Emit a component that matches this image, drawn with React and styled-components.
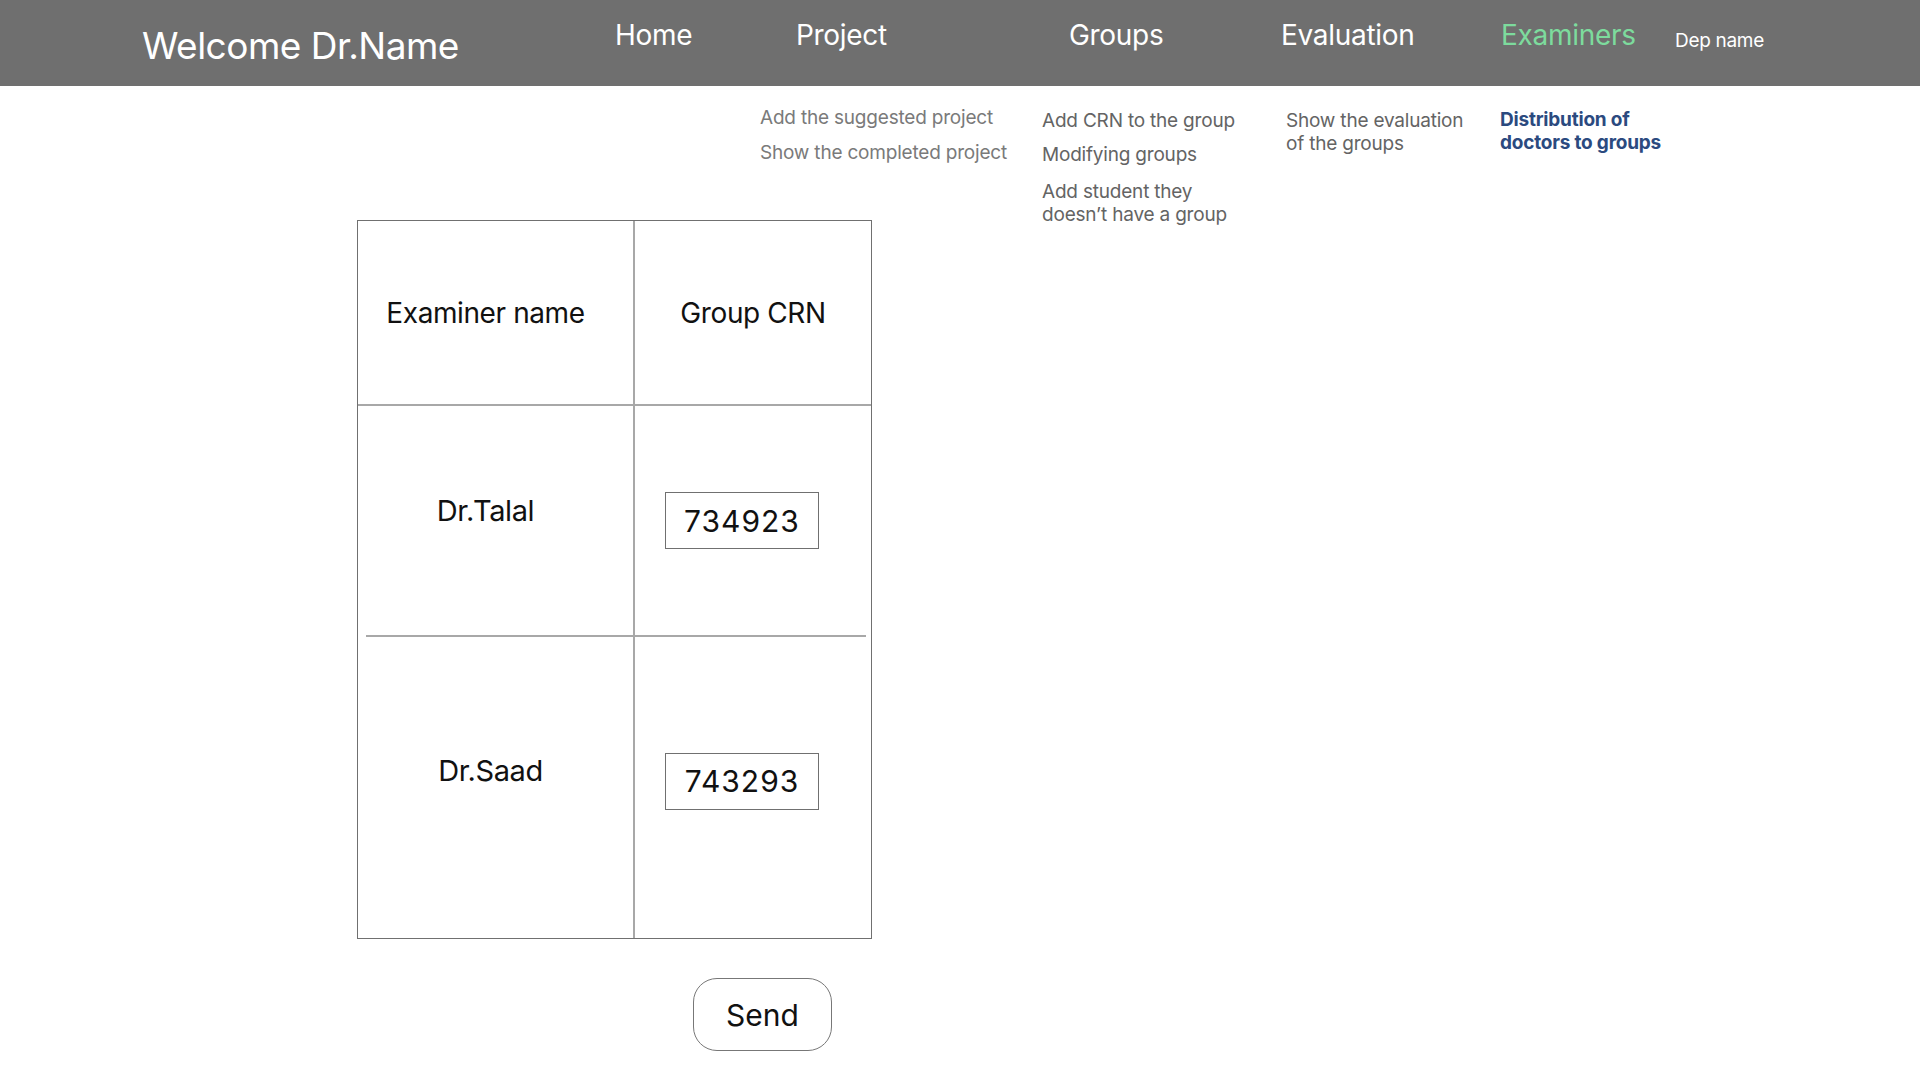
import React from 'react';
import styled, { createGlobalStyle } from 'styled-components';

const GlobalStyle = createGlobalStyle`
	body {
		margin: 0;
		background: #ffffff;
		font-family: Inter, 'Noto Sans', sans-serif;
	}
`;

const TopBar = styled.header`
	display: flex;
	align-items: flex-start;
	height: 86px;
	padding-left: 142px;
	background-color: #6f6f6f;
	color: #ffffff;
	box-sizing: border-box;
`;

const Title = styled.h1`
	width: 473px;
	margin: 0;
	padding-top: 23px;
	font-size: 37px;
	font-weight: 400;
	letter-spacing: -0.5px;
`;

const NavLink = styled.a`
	width: ${(p) => p.$w}px;
	padding-top: ${(p) => (p.$small ? 29 : 18)}px;
	font-size: ${(p) => (p.$small ? 19 : 28)}px;
	color: ${(p) => (p.$active ? '#7ddb9d' : '#ffffff')};
	text-decoration: none;
	cursor: pointer;
	letter-spacing: -0.3px;
`;

const SubMenu = styled.div`
	display: flex;
	align-items: flex-start;
	padding-left: 760px;
	padding-top: 20px;
`;

const SubColumn = styled.ul`
	width: ${(p) => p.$w}px;
	margin: ${(p) => p.$offset || 0}px 0 0;
	padding: 0;
	list-style: none;
	display: flex;
	flex-direction: column;
	gap: ${(p) => p.$gap}px;
`;

const SubItem = styled.li`
	font-size: 19px;
	line-height: 23px;
	font-weight: ${(p) => (p.$current ? 700 : 400)};
	color: ${(p) => (p.$current ? '#2b4a7f' : p.$light ? '#7a7a7a' : '#646464')};
	letter-spacing: -0.2px;
	margin-top: ${(p) => p.$mt || 0}px;
`;

const Main = styled.main`
	display: flex;
	flex-direction: column;
	align-items: flex-start;
	padding-left: 357px;
	margin-top: -6px;
`;

const Table = styled.div`
	display: grid;
	grid-template-columns: 275px 238px;
	grid-template-rows: 184px 231px 302px;
	border: 1px solid #707070;
`;

const Cell = styled.div`
	position: relative;
	display: flex;
	align-items: center;
	justify-content: center;
	font-size: ${(p) => (p.$head ? 28 : 29)}px;
	color: #111111;
	letter-spacing: -0.4px;
	border-left: ${(p) => (p.$right ? '2px solid #a8a8a8' : 'none')};
	padding-bottom: ${(p) => p.$lift || 0}px;
	padding-right: ${(p) => p.$pr || 0}px;

	&::before {
		content: '';
		display: ${(p) => (p.$top ? 'block' : 'none')};
		position: absolute;
		top: -1px;
		left: ${(p) => p.$insetL || 0}px;
		right: ${(p) => p.$insetR || 0}px;
		height: 2px;
		background: #a8a8a8;
	}
`;

const CrnInput = styled.input`
	width: 154px;
	height: 57px;
	box-sizing: border-box;
	border: 1px solid #707070;
	text-align: center;
	font-family: Inter, 'Noto Sans', sans-serif;
	font-size: 30px;
	color: #111111;
	letter-spacing: 1px;
	outline: none;
`;

const SendButton = styled.button`
	margin: 39px 0 0 336px;
	width: 139px;
	height: 73px;
	border: 1px solid #777777;
	border-radius: 24px;
	background: #ffffff;
	font-family: Inter, 'Noto Sans', sans-serif;
	font-size: 30px;
	color: #111111;
	cursor: pointer;
`;

const navItems = [
	{ label: 'Home', w: 181 },
	{ label: 'Project', w: 273 },
	{ label: 'Groups', w: 212 },
	{ label: 'Evaluation', w: 220 },
	{ label: 'Examiners', w: 174, active: true },
];

const examiners = [
	{ name: 'Dr.Talal', crn: '734923', lift: 20, crnLift: 0, pr: 20, insetL: 0, insetR: 0 },
	{ name: 'Dr.Saad', crn: '743293', lift: 34, crnLift: 12, pr: 10, insetL: 8, insetR: 5 },
];

const App = () => {
	return (
		<>
			<GlobalStyle />
			<TopBar>
				<Title>Welcome Dr.Name</Title>
				{navItems.map((item) => (
					<NavLink key={item.label} $w={item.w} $active={item.active}>
						{item.label}
					</NavLink>
				))}
				<NavLink $small $w={120}>Dep name</NavLink>
			</TopBar>

			<SubMenu>
				<SubColumn $w={282} $gap={12}>
					<SubItem $light>Add the suggested project</SubItem>
					<SubItem $light>Show the completed project</SubItem>
				</SubColumn>
				<SubColumn $w={244} $gap={11} $offset={3}>
					<SubItem>Add CRN to the group</SubItem>
					<SubItem>Modifying groups</SubItem>
					<SubItem $mt={3}>Add student they<br />doesn’t have a group</SubItem>
				</SubColumn>
				<SubColumn $w={214} $gap={0} $offset={3}>
					<SubItem>Show the evaluation<br />of the groups</SubItem>
				</SubColumn>
				<SubColumn $w={200} $gap={0} $offset={2}>
					<SubItem $current>Distribution of<br />doctors to groups</SubItem>
				</SubColumn>
			</SubMenu>

			<Main>
				<Table>
					<Cell $head $pr={20}>Examiner name</Cell>
					<Cell $head $right>Group CRN</Cell>
					{examiners.map((ex) => (
						<React.Fragment key={ex.name}>
							<Cell $top $lift={ex.lift} $pr={ex.pr} $insetL={ex.insetL}>{ex.name}</Cell>
							<Cell $top $right $lift={ex.crnLift} $pr={22} $insetR={ex.insetR}>
								<CrnInput defaultValue={ex.crn} />
							</Cell>
						</React.Fragment>
					))}
				</Table>
				<SendButton>Send</SendButton>
			</Main>
		</>
	);
};

export default App;
